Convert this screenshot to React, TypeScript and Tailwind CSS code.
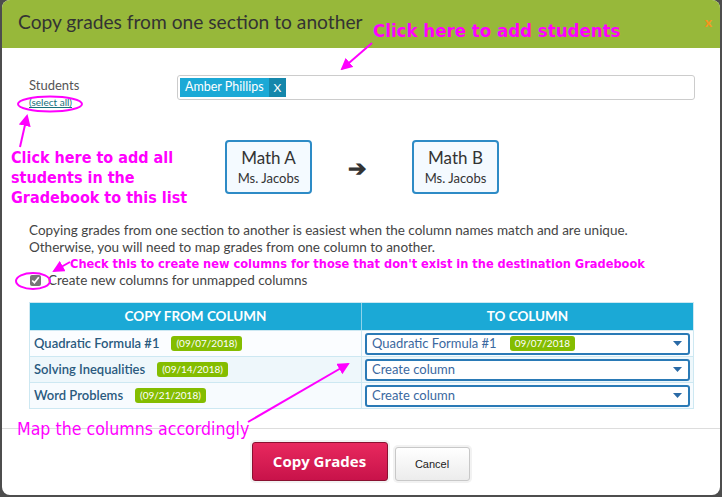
import React from "react";

const body = { fontFamily: "Lato, 'Open Sans', sans-serif" };
const note = { fontFamily: "'DejaVu Sans Condensed', 'DejaVu Sans', sans-serif" };

const rows = [
    { name: "Quadratic Formula #1", date: "09/07/2018", to: "Quadratic Formula #1", toDate: "09/07/2018", bg: "bg-[#fbfdff]" },
    { name: "Solving Inequalities", date: "09/14/2018", to: "Create column", toDate: "", bg: "bg-[#eef7fb]" },
    { name: "Word Problems", date: "09/21/2018", to: "Create column", toDate: "", bg: "bg-[#f7fbfe]" },
];

const Card: React.FC<{ title: string }> = ({ title }) => (
    <div className="w-[87px] h-[54px] rounded-[4px] border-2 border-[#2d8bc6] bg-[#f4faff] flex flex-col items-center justify-center text-[#333]">
        <div className="text-[17px] leading-[22px]">{title}</div>
        <div className="text-[13px] leading-[18px]">Ms. Jacobs</div>
    </div>
);

const Annotations: React.FC = () => (
    <>
        <svg className="absolute inset-0 pointer-events-none" width="718" height="495" viewBox="2 0 718 495">
            <defs>
                <marker id="head" markerWidth="6" markerHeight="6" refX="5" refY="3" orient="auto" markerUnits="strokeWidth">
                    <path d="M0,0 L6,3 L0,6 Z" fill="#ff00ff" />
                </marker>
            </defs>
            <g stroke="#ff00ff" strokeWidth="2" fill="none">
                <line x1="372" y1="43" x2="342" y2="69" markerEnd="url(#head)" />
                <line x1="20" y1="147" x2="27" y2="116" markerEnd="url(#head)" />
                <line x1="70" y1="262" x2="54" y2="271" markerEnd="url(#head)" />
                <line x1="248" y1="422" x2="348" y2="364" markerEnd="url(#head)" />
                <ellipse cx="50" cy="104" rx="32" ry="7.5" />
                <ellipse cx="33" cy="281" rx="17" ry="8" />
            </g>
        </svg>
        <div style={note} className="absolute left-[371px] top-[22px] text-[18.5px] font-bold text-[#ff00ff] leading-none whitespace-nowrap">Click here to add students</div>
        <div style={note} className="absolute left-[9px] top-[148px] text-[16px] font-bold text-[#ff00ff] leading-[20px] whitespace-nowrap">
            Click here to add all<br />students in the<br />Gradebook to this list
        </div>
        <div style={note} className="absolute left-[68px] top-[258px] text-[12.7px] font-bold text-[#ff00ff] leading-none whitespace-nowrap">
            Check this to create new columns for those that don't exist in the destination Gradebook
        </div>
        <div style={note} className="absolute left-[15px] top-[421px] text-[17.6px] text-[#ff00ff] leading-none whitespace-nowrap">Map the columns accordingly</div>
    </>
);

export default function App() {
    return (
        <div className="w-[722px] h-[497px] bg-[#4d4d4d] px-[2px] overflow-hidden" style={body}>
            <div className="relative w-[718px] h-[495px] bg-white rounded-[8px] overflow-hidden flex flex-col">
                <div className="h-[48px] shrink-0 bg-[#97b83a] flex items-center justify-between pl-[16px] pr-[8px]">
                    <div className="text-[19.2px] text-[#333] -mt-[3px]">Copy grades from one section to another</div>
                    <div className="text-[14px] font-bold text-[#f7941d] -mt-[6px]">x</div>
                </div>

                <div className="flex flex-col px-[27px] pt-[27px] flex-1">
                    <div className="flex">
                        <div className="w-[148px] flex flex-col">
                            <div className="text-[13px] text-[#555] leading-[18px] mt-[1px]">Students</div>
                            <div className="text-[10px] text-[#16707c] underline leading-[14px] mt-[1px]">(select all)</div>
                        </div>
                        <div className="flex-1 h-[25px] border border-[#ccc] rounded-[3px] bg-white flex items-center px-[2px] mr-[-2px]">
                            <div className="h-[19px] flex items-stretch text-white text-[12.5px]">
                                <span className="bg-[#1ba9d6] px-[5px] flex items-center">Amber Phillips</span>
                                <span className="bg-[#1587ab] px-[5px] flex items-center text-[12px]">X</span>
                            </div>
                        </div>
                    </div>

                    <div className="flex items-center mt-[31px] ml-[196px]">
                        <Card title="Math A" />
                        <div className="w-[100px] flex justify-center text-[22px] text-[#333] font-bold pr-[10px]">➔</div>
                        <Card title="Math B" />
                    </div>

                    <div className="mt-[28px] text-[13.5px] leading-[17px] text-[#444]">
                        <div>Copying grades from one section to another is easiest when the column names match and are unique.</div>
                        <div>Otherwise, you will need to map grades from one column to another.</div>
                    </div>

                    <label className="flex items-center mt-[16px] text-[13.5px] text-[#444] leading-[16px]">
                        <input type="checkbox" defaultChecked className="w-[11px] h-[11px] mr-[7px] ml-[1px] accent-[#777]" />
                        Create new columns for unmapped columns
                    </label>

                    <div className="mt-[14px] mr-[-1px] border border-[#cde8f2]">
                        <div className="grid grid-cols-[332px_1fr] bg-[#1ba9d6] text-white font-bold text-[13.5px] uppercase h-[27px]">
                            <div className="flex items-center justify-center border-r border-[#8fd3ea]">Copy from column</div>
                            <div className="flex items-center justify-center">To column</div>
                        </div>
                        {rows.map((r) => (
                            <div key={r.name} className={`grid grid-cols-[332px_1fr] h-[26px] border-t border-[#cde8f2] ${r.bg}`}>
                                <div className="flex items-center pl-[4px] border-r border-[#cde8f2] text-[13px] font-semibold text-[#2a5a7e]">
                                    {r.name}
                                    <span className="ml-[12px] bg-[#84bd00] text-white text-[10px] font-normal rounded-[3px] px-[5px] h-[15px] flex items-center">({r.date})</span>
                                </div>
                                <div className="flex items-center px-[3px]">
                                    <div className="w-full h-[22px] border-2 border-[#2a7ab6] rounded-[3px] bg-white flex items-center pl-[5px] pr-[6px] text-[13px] text-[#3a68a0]">
                                        <span>{r.to}</span>
                                        {r.toDate && (
                                            <span className="ml-[13px] bg-[#84bd00] text-white text-[10px] rounded-[3px] px-[5px] h-[15px] flex items-center">{r.toDate}</span>
                                        )}
                                        <svg className="ml-auto" width="9" height="5" viewBox="0 0 9 5"><path d="M0 0h9L4.5 5z" fill="#2a6aa6" /></svg>
                                    </div>
                                </div>
                            </div>
                        ))}
                    </div>
                </div>

                <div className="h-[67px] shrink-0 border-t border-[#ddd] flex justify-center items-end gap-[3px] pb-[12px]">
                    <div className="p-[2px] rounded-[5px] bg-[#f2f2f2] ml-[-1px]">
                        <button className="w-[136px] h-[39px] rounded-[3px] border border-[#8a1030] bg-gradient-to-b from-[#e8285e] to-[#c8124a] text-white font-bold text-[15px]" style={{ fontFamily: "'Open Sans', sans-serif" }}>
                            Copy Grades
                        </button>
                    </div>
                    <div className="p-[2px] rounded-[5px] bg-[#f2f2f2]">
                        <button className="w-[75px] h-[34px] rounded-[3px] border border-[#c8c8c8] bg-gradient-to-b from-white to-[#ececec] text-[#222] text-[11px]" style={{ fontFamily: "'Liberation Sans', sans-serif" }}>
                            Cancel
                        </button>
                    </div>
                </div>

                <Annotations />
            </div>
        </div>
    );
}
